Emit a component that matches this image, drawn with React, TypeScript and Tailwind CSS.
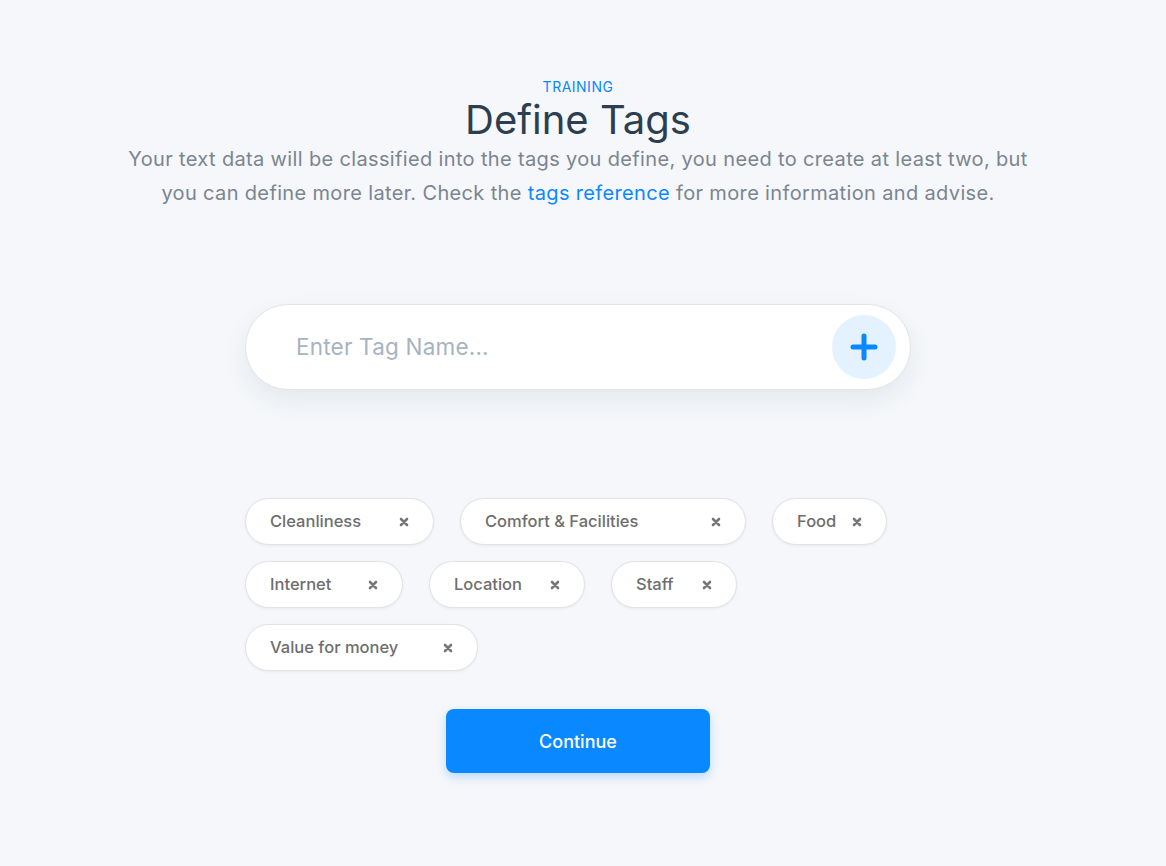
import React, { useState } from "react";

const initialTags = [
    { name: "Cleanliness", w: "w-[189px]" },
    { name: "Comfort & Facilities", w: "w-[286px]" },
    { name: "Food", w: "w-[115px]" },
    { name: "Internet", w: "w-[158px]" },
    { name: "Location", w: "w-[156px]" },
    { name: "Staff", w: "w-[126px]" },
    { name: "Value for money", w: "w-[233px]" },
];

function CloseIcon() {
    return (
        <svg width="10" height="10" viewBox="0 0 10 10" fill="none">
            <path d="M2 2L8 8M8 2L2 8" stroke="#777777" strokeWidth="2.6" strokeLinecap="round" />
        </svg>
    );
}

function PlusIcon() {
    return (
        <svg width="28" height="28" viewBox="0 0 28 28" fill="none">
            <path d="M14 3V25M3 14H25" stroke="#0a88ff" strokeWidth="5" strokeLinecap="round" />
        </svg>
    );
}

export default function App() {
    const [tags, setTags] = useState(initialTags);

    return (
        <div className="min-h-[866px] w-full bg-[#f5f7fa] font-['Inter','Noto_Sans',sans-serif]">
            <div className="flex flex-col items-center pt-[78px] pr-[10px]">
                {/* header */}
                <p className="text-[14px] leading-[17px] text-[#0a88ff] tracking-[0.5px]">TRAINING</p>
                <h1 className="text-[40px] leading-[48px] text-[#2c3e50] mt-[1px]">Define Tags</h1>
                <p className="w-[912px] text-center text-[20px] tracking-[0.35px] leading-[34px] text-[#7b8591] mt-[-2px]">
                    Your text data will be classified into the tags you define, you need to create at least two, but
                    you can define more later. Check the{" "}
                    <span className="text-[#0a88ff] cursor-pointer">tags reference</span> for more information and
                    advise.
                </p>

                {/* input */}
                <div className="mt-[94px] w-[666px] h-[86px] rounded-full bg-white border border-[#e4e4e4] shadow-[0_10px_24px_rgba(40,60,90,0.08)] flex items-center pl-[50px] pr-[14px]">
                    <input
                        type="text"
                        placeholder="Enter Tag Name..."
                        className="flex-1 bg-transparent outline-none text-[22.5px] tracking-[0.2px] text-[#2c3e50] placeholder:text-[#a8b3bf]"
                    />
                    <button className="w-[64px] h-[64px] rounded-full bg-[#e4f1fe] flex items-center justify-center">
                        <PlusIcon />
                    </button>
                </div>

                {/* tags */}
                <div className="mt-[108px] w-[666px] flex flex-wrap gap-x-[26px] gap-y-[16px]">
                    {tags.map((t) => (
                        <div
                            key={t.name}
                            className={`${t.w} h-[47px] rounded-full bg-white border border-[#e2e2e2] shadow-[0_1px_3px_rgba(0,0,0,0.06)] flex items-center justify-between pl-[24px] pr-[24px]`}
                        >
                            <span className="text-[16.5px] font-medium text-[#6e6e6e]">{t.name}</span>
                            <button onClick={() => setTags(tags.filter((x) => x.name !== t.name))}>
                                <CloseIcon />
                            </button>
                        </div>
                    ))}
                </div>

                {/* continue */}
                <button className="mt-[38px] w-[264px] h-[64px] rounded-[8px] bg-[#0a88ff] text-white text-[18px] font-medium shadow-[0_4px_10px_rgba(10,136,255,0.25)]">
                    Continue
                </button>
            </div>
        </div>
    );
}
